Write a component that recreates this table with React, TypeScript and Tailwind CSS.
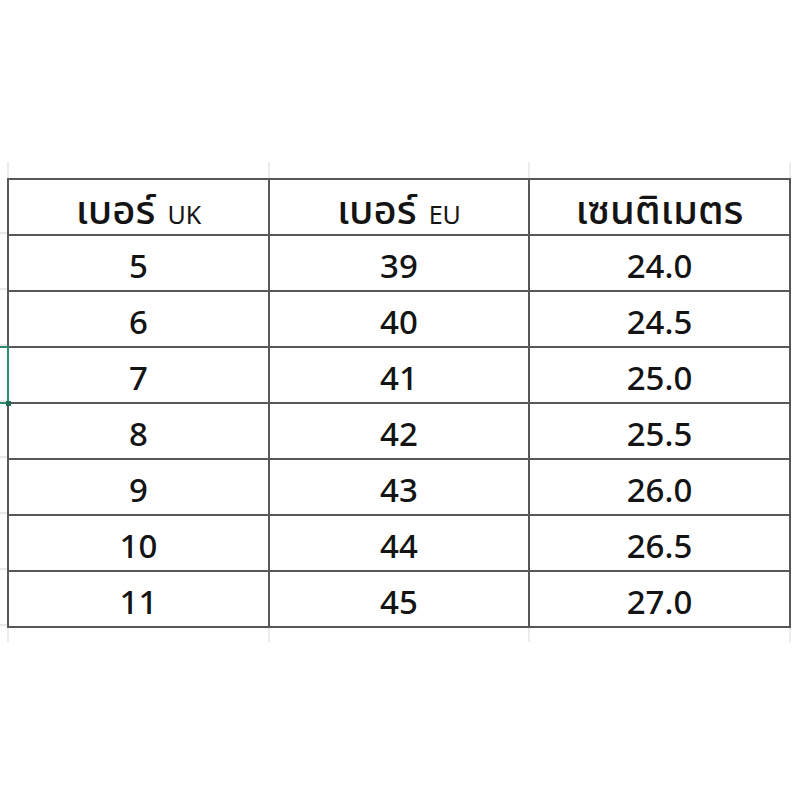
const rows = [
  ["5", "39", "24.0"],
  ["6", "40", "24.5"],
  ["7", "41", "25.0"],
  ["8", "42", "25.5"],
  ["9", "43", "26.0"],
  ["10", "44", "26.5"],
  ["11", "45", "27.0"],
];

const font = { fontFamily: '"Noto Sans", "Noto Sans Thai", Tahoma, sans-serif' };

export default function App() {
  return (
    <div className="relative w-[800px] h-[800px] bg-white text-[#141414] overflow-hidden" style={font}>
      <div className="pt-[162px]">
        {/* faint sheet grid above the table */}
        <div className="ml-[7px] w-[784px] h-[16px] grid grid-cols-[261px_260px_261px] border-r-2 border-[#ececec]">
          <div className="border-l-2 border-[#ececec]" />
          <div className="border-l-2 border-[#ececec]" />
          <div className="border-l-2 border-[#ececec]" />
        </div>

        <div className="flex">
          {/* faint sheet row lines left of the table */}
          <div className="w-[7px] flex flex-col">
            {Array.from({ length: 8 }).map((_, i) => (
              <div key={i} className="h-[56px] border-b-2 border-[#e8e8e8]" />
            ))}
          </div>

          <div className="w-[784px] grid grid-cols-[259px_258px_259px] gap-[2px] p-[2px] bg-[#575757]">
            <div className="h-[54px] bg-white flex items-baseline justify-center gap-[12px] pt-[4px]">
              <span className="text-[40px] font-medium leading-[50px]">เบอร์</span>
              <span className="text-[25px] leading-[50px]">UK</span>
            </div>
            <div className="h-[54px] bg-white flex items-baseline justify-center gap-[12px] pt-[4px]">
              <span className="text-[40px] font-medium leading-[50px]">เบอร์</span>
              <span className="text-[25px] leading-[50px]">EU</span>
            </div>
            <div className="h-[54px] bg-white flex items-baseline justify-center pt-[4px]">
              <span className="text-[40px] font-medium leading-[50px]">เซนติเมตร</span>
            </div>
            {rows.map((r) =>
              r.map((v, j) => (
                <div key={r[0] + "-" + j} className="h-[54px] bg-white flex items-center justify-center pt-[4px] text-[33px] font-medium leading-none">
                  {v}
                </div>
              ))
            )}
          </div>
        </div>

        <div className="ml-[7px] w-[784px] h-[14px] grid grid-cols-[261px_260px_261px] border-r-2 border-[#ececec]">
          <div className="border-l-2 border-[#ececec]" />
          <div className="border-l-2 border-[#ececec]" />
          <div className="border-l-2 border-[#ececec]" />
        </div>
      </div>

      {/* selected cell outline from the sheet */}
      <div className="absolute left-0 top-[346px] w-[9px] h-[58px] border-y-2 border-r-2 border-[#2e8b6e]" />
      <div className="absolute left-[6px] top-[401px] w-[5px] h-[5px] bg-[#1f6f56]" />
    </div>
  );
}
